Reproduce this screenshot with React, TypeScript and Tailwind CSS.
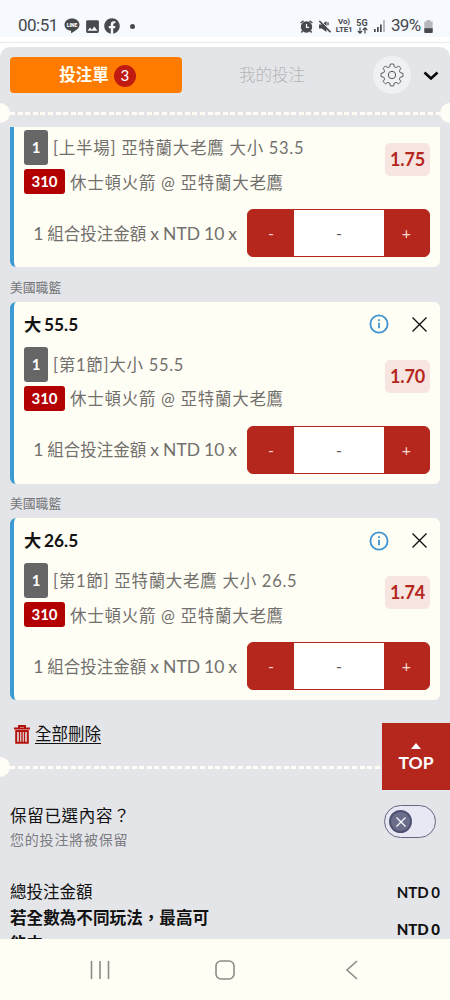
import { MdImage } from "react-icons/md";
import { FaFacebook } from "react-icons/fa";

const bets = [
  { pick: "", market: "[上半場] 亞特蘭大老鷹 大小 53.5", odds: "1.75" },
  { pick: "55.5", market: "[第1節]大小 55.5", odds: "1.70" },
  { pick: "26.5", market: "[第1節] 亞特蘭大老鷹 大小 26.5", odds: "1.74" },
];

function StatusBar() {
  return (
    <header className="h-[43px] shrink-0 border-b border-[#e9eaec] bg-white">
      <div className="flex h-[37px] items-start bg-[#f6f9fe] pt-[15px] pl-[18px] pr-[17px] font-['Roboto',sans-serif] text-[#47494c]">
        <div className="flex h-[22px] items-center">
          <span className="w-[40px] text-[17px] tracking-[-0.5px]">00:51</span>
          <svg className="ml-[6px]" width="16" height="16" viewBox="0 0 16 16">
            <path d="M8 .5C3.8.5.5 3.2.5 6.7c0 3 2.5 5.5 6.2 6.1.6.1.5.5.3 2.4 2.5-1.2 8.5-4.4 8.5-8.5C15.500 3.200 12.200.5 8 .5Z" fill="currentColor" />
            <text x="8" y="8.700" textAnchor="middle" fontSize="5" fontWeight="900" fill="#fff">LINE</text>
          </svg>
          <MdImage size={17} className="ml-[4px]" />
          <FaFacebook size={16} className="ml-[3px]" />
          <span className="ml-[10px] size-[5px] rounded-full bg-[#47494c]" />
        </div>
        <div className="ml-auto flex h-[22px] items-center">
          <svg width="13" height="13" viewBox="0 0 13 13">
            <circle cx="6.500" cy="7" r="5.700" fill="currentColor" />
            <path d="M.6 3 3.500.8M12.400 3 9.500.8M2.500 11 1.300 12.400M10.500 11l1.200 1.400" stroke="currentColor" strokeWidth="1.500" />
            <path d="M6.500 4v3.400H9" fill="none" stroke="#f6f9fe" strokeWidth="1.200" />
          </svg>
          <svg className="ml-[5px]" width="14" height="13" viewBox="0 0 14 13">
            <path d="M1 4.500h2.700L8.500 1v11L3.700 8.500H1Z" fill="currentColor" />
            <path d="M10 2.200v3" stroke="currentColor" strokeWidth="1.300" />
            <path d="M2.300.3 13 11" stroke="#f6f9fe" strokeWidth="1" />
            <path d="m1.300 1 11.200 11.200" stroke="currentColor" strokeWidth="1.700" />
          </svg>
          <span className="ml-[3px] w-[18px] text-center text-[8px] leading-[8px] font-bold tracking-[-0.2px]">
            Vo)<br />LTE1
          </span>
          <span className="ml-[3px] flex w-[12px] flex-col items-center text-[9px] leading-[8px] font-bold">
            5G
            <svg width="11" height="7" viewBox="0 0 11 7" fill="none" stroke="currentColor" strokeWidth="1.200">
              <path d="M3 .5v5.500M.8 4 3 6.200 5.200 4M8 6.500V1M5.800 3 8 .8 10.200 3" />
            </svg>
          </span>
          <svg className="ml-[6px]" width="12" height="12" viewBox="0 0 12 12" fill="currentColor">
            <path d="M0 9h1.700v3H0zM3 7h1.700v5H3zM6 4.500h1.700V12H6z" />
            <path d="M9 0h2v12H9z" opacity=".35" />
          </svg>
          <span className="ml-[5px] w-[33px] text-[17px] tracking-[-0.7px]">39%</span>
          <svg width="9" height="13" viewBox="0 0 9 14">
            <path d="M2.500 0h4v1.500H9V13a1 1 0 0 1-1 1H1a1 1 0 0 1-1-1V1.500h2.500Z" fill="#b5b7ba" />
            <path d="M0 9h9v4a1 1 0 0 1-1 1H1a1 1 0 0 1-1-1Z" fill="#47494c" />
          </svg>
        </div>
      </div>
    </header>
  );
}

function Tabs() {
  return (
    <div className="flex h-[56px] items-center pl-[10px]">
      <button className="flex h-[36px] w-[172px] items-center justify-center rounded bg-[#ff7b00] pt-px pl-[3px] text-[16.500px] font-bold text-[#fffdf0]">
        投注單
        <span className="ml-[5px] flex size-[22px] items-center justify-center rounded-full bg-[#bf1b13] text-[15px] font-normal text-white">3</span>
      </button>
      <span className="ml-[57px] w-[67px] pt-px text-[16.500px] font-light text-[#b4b5b8]">我的投注</span>
      <span className="ml-[67px] flex size-[38px] items-center justify-center rounded-full bg-[#f0f1f4]">
        <svg width="24" height="24" viewBox="0 0 24 24" fill="none" stroke="#55585b" strokeWidth="1">
          <path d="M10.200 1.500h3.600l.6 2.900 2 .8 2.500-1.600 2.500 2.500-1.600 2.500.8 2 2.900.6v3.600l-2.900.6-.8 2 1.600 2.500-2.500 2.500-2.500-1.600-2 .8-.6 2.900h-3.600l-.6-2.900-2-.8-2.500 1.600-2.500-2.500 1.600-2.500-.8-2-2.900-.6v-3.600l2.900-.6.8-2-1.600-2.500 2.500-2.500 2.500 1.600 2-.8Z" transform="translate(.6 -.4) scale(.95)" strokeLinejoin="round" />
          <circle cx="12" cy="12" r="3.700" />
        </svg>
      </span>
      <svg className="mt-[2px] ml-[12px]" width="16" height="12" viewBox="0 0 16 12" fill="none" stroke="#090909" strokeWidth="2.600">
        <path d="m1.500 2.500 6.500 6 6.500-6" />
      </svg>
    </div>
  );
}

// ticket perforation with a notch on each side
function Perforation() {
  return (
    <div className="-mx-[10px] flex h-5 items-center overflow-hidden">
      <span className="size-5 shrink-0 rounded-full bg-[#fffdf5]" />
      <span className="h-[3px] flex-1 bg-[repeating-linear-gradient(90deg,#fffdf5_0_5px,transparent_5px_7.600px)]" />
      <span className="size-5 shrink-0 rounded-full bg-[#fffdf5]" />
    </div>
  );
}

function Stepper() {
  return (
    <div className="flex h-[48px] w-[183px] overflow-hidden rounded-[6px] border border-[#b5261c] bg-[#b5261c] text-[16px]">
      <button className="w-[46px] text-[#f7d9cf]">-</button>
      <span className="flex w-[90px] items-center justify-center bg-white text-[#555]">-</span>
      <button className="flex-1 text-[#f7d9cf]">+</button>
    </div>
  );
}

function BetCard({ pick, market, odds }: { pick: string; market: string; odds: string }) {
  return (
    <section
      className={`border-l-4 border-[#3d9bd4] bg-[#fffef5] pr-[10px] pb-[10px] pl-[10px] text-[#72706d] ${pick ? "rounded-[6px]" : "rounded-b-[6px] pt-[3px]"}`}
    >
      {pick && (
        <div className="flex h-[45px] items-center text-[#111]">
          <h3 className="pt-px text-[17.300px] font-bold [word-spacing:-1.500px]">大 {pick}</h3>
          <svg className="ml-auto" width="20" height="20" viewBox="0 0 20 20" fill="none" stroke="#3d94d1" strokeWidth="1.800">
            <circle cx="10" cy="10" r="8.600" />
            <path d="M10 8.700v5.500M10 5.300v1.700" />
          </svg>
          <svg className="mr-[3px] ml-[23px]" width="15" height="15" viewBox="0 0 15 15" stroke="#111" strokeWidth="1.400">
            <path d="m.5.5 14 14m0-14-14 14" />
          </svg>
        </div>
      )}
      <div className="flex justify-between">
        <div className="text-[16.500px] tracking-[0.72px] whitespace-nowrap">
          <div className="flex h-[35px] items-center">
            <span className="mr-[5px] flex h-full w-[24px] items-center justify-center rounded-[3px] bg-[#666] text-[15px] font-bold tracking-normal text-white">1</span>
            <span className="pt-[2px]">{market}</span>
          </div>
          <div className="mt-[4px] flex h-[25px] items-center">
            <span className="mr-[5px] flex h-full w-[41px] items-center justify-center rounded-[3px] bg-[#b30000] text-[15px] font-bold tracking-normal text-white">310</span>
            <span className="pt-[3px]">休士頓火箭 @ 亞特蘭大老鷹</span>
          </div>
        </div>
        <span className="mt-[13px] flex h-[33px] w-[45px] shrink-0 items-center justify-center rounded-[5px] bg-[#f6e5e0] text-[18px] font-bold tracking-[-0.200px] text-[#b5261c]">{odds}</span>
      </div>
      <div className="mt-[15px] flex items-center justify-end whitespace-nowrap">
        <span className="mr-[10px] pt-[2px] text-[17.500px] [word-spacing:-0.500px]">
          1 <span className="text-[16.500px]">組合投注金額</span> x NTD 10 x
        </span>
        <Stepper />
      </div>
    </section>
  );
}

function Summary() {
  return (
    <>
      <div className="mt-[27px] flex h-[45px] items-start justify-between">
        <div className="leading-[24px]">
          <p className="text-[16.500px] tracking-[0.7px] text-[#111]">保留已選內容？</p>
          <p className="text-[14px] leading-[23px] tracking-[0.8px] text-[#7a7b80]">您的投注將被保留</p>
        </div>
        <button className="mt-px mr-1 flex h-[33px] w-[52px] items-center rounded-full border border-[#666781] bg-[#e7e8f3] pl-[4px]">
          <span className="flex size-[23px] items-center justify-center rounded-full border-2 border-[#4f5172] bg-[#6b6d8b]">
            <svg width="10" height="10" viewBox="0 0 10 10" stroke="#fff" strokeWidth="1.200">
              <path d="m.5.500 9 9m0-9-9 9" />
            </svg>
          </span>
        </button>
      </div>
      <div className="mt-[30px] flex h-[26px] items-center justify-between text-[16.500px] text-[#111]">
        <span>總投注金額</span>
        <b className="text-[15px] [word-spacing:-1px]">NTD 0</b>
      </div>
      <div className="flex justify-between text-[16.600px] leading-[26px] font-bold text-[#111]">
        <p className="w-[205px]">若全數為不同玩法，最高可能中</p>
        <b className="text-[15px] leading-[49px] [word-spacing:-1px]">NTD 0</b>
      </div>
    </>
  );
}

export default function App() {
  return (
    <div className="relative flex h-[1000px] w-[450px] flex-col overflow-hidden bg-white font-['Lato','Noto_Sans_CJK_TC',sans-serif]">
      <StatusBar />
      <main className="mt-[4px] flex min-h-0 flex-1 flex-col overflow-hidden rounded-t-[10px] bg-[#e4e5e8]">
        <Tabs />
        <Perforation />
        <div className="mt-[4px] min-h-0 flex-1 overflow-hidden px-[10px]">
          {bets.map((bet) => (
            <div key={bet.odds}>
              {bet.pick && <h2 className="flex h-[34.500px] items-center pt-[6px] text-[12.800px] text-[#737477]">美國職籃</h2>}
              <BetCard {...bet} />
            </div>
          ))}
          <button className="mt-[21px] flex h-[26px] items-center pl-[4px] text-[16.500px] text-[#111]">
            <svg width="16" height="19" viewBox="0 0 16 19" fill="none" stroke="#b5120c">
              <path d="M0 3.500h16M5 3V1h6v2" strokeWidth="2" />
              <path d="M2.200 6v11.800h11.600V6Z" strokeWidth="2" />
              <path d="M5.500 6v11M8 6v11M10.500 6v11" strokeWidth="1.400" />
            </svg>
            <span className="ml-[5px] underline underline-offset-[3px]">全部刪除</span>
          </button>
          <div className="-mx-[10px] mt-[10px]">
            <Perforation />
          </div>
          <Summary />
        </div>
      </main>
      <nav className="flex h-[61px] shrink-0 items-center justify-between bg-[#fffef5] px-[90px] text-[#8c8b86]">
        <svg width="20" height="20" viewBox="0 0 20 20" stroke="currentColor" strokeWidth="1.600">
          <path d="M1.500 1v18M10 1v18M18.500 1v18" />
        </svg>
        <svg width="20" height="20" viewBox="0 0 20 20" fill="none" stroke="currentColor" strokeWidth="1.600">
          <rect x="1" y="1" width="18" height="18" rx="5" />
        </svg>
        <svg width="20" height="20" viewBox="0 0 20 20" fill="none" stroke="currentColor" strokeWidth="1.600">
          <path d="M17 1 7 10l10 9" />
        </svg>
      </nav>
      <button className="absolute top-[723px] right-0 flex h-[67px] w-[68px] flex-col items-center bg-[#b5261c] pt-[20px] text-[17.500px] leading-[28px] font-bold text-white">
        <svg width="10" height="6" viewBox="0 0 10 6" fill="currentColor">
          <path d="m5 0 5 6H0Z" />
        </svg>
        TOP
      </button>
    </div>
  );
}
